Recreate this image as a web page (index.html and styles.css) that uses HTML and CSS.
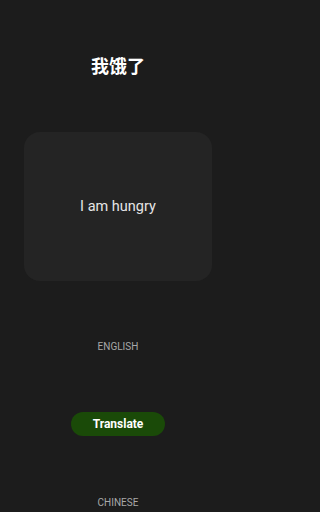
FILE: index.html
```html
<!DOCTYPE html>
<html lang="en">
<head>
<meta charset="utf-8">
<link rel="stylesheet" href="styles.css">
</head>
<body>
<main class="screen">
  <h1 class="title">我饿了</h1>
  <div class="card"><p class="source">I am hungry</p></div>
  <div class="lang lang-from">ENGLISH</div>
  <button class="translate">Translate</button>
  <div class="lang lang-to">CHINESE</div>
</main>
</body>
</html>
```
FILE: styles.css
```css
html, body {
  margin: 0;
  padding: 0;
  background: #1c1c1c;
}
.screen {
  width: 236px;
  height: 512px;
  overflow: hidden;
  display: flex;
  flex-direction: column;
  align-items: center;
  font-family: Roboto, "Noto Sans", sans-serif;
}
.title {
  margin: 53px 0 0;
  height: 24px;
  line-height: 24px;
  font-size: 18px;
  font-weight: 700;
  color: #ffffff;
  font-family: "Noto Sans CJK SC", "Noto Sans", sans-serif;
}
.card {
  margin-top: 55px;
  width: 188px;
  height: 149px;
  border-radius: 16px;
  background: #242424;
  display: flex;
  align-items: center;
  justify-content: center;
}
.source {
  margin: 0;
  font-size: 14.5px;
  color: #e6e6e6;
}
.lang {
  font-size: 10px;
  line-height: 14px;
  color: #a8a8a8;
}
.lang-from {
  margin-top: 59px;
}
.translate {
  margin-top: 58px;
  width: 94px;
  height: 24px;
  border: none;
  border-radius: 12px;
  background: #1a4a08;
  color: #ffffff;
  font-family: Roboto, sans-serif;
  font-weight: 700;
  font-size: 12px;
  padding: 0;
}
.lang-to {
  margin-top: 60px;
}
```
